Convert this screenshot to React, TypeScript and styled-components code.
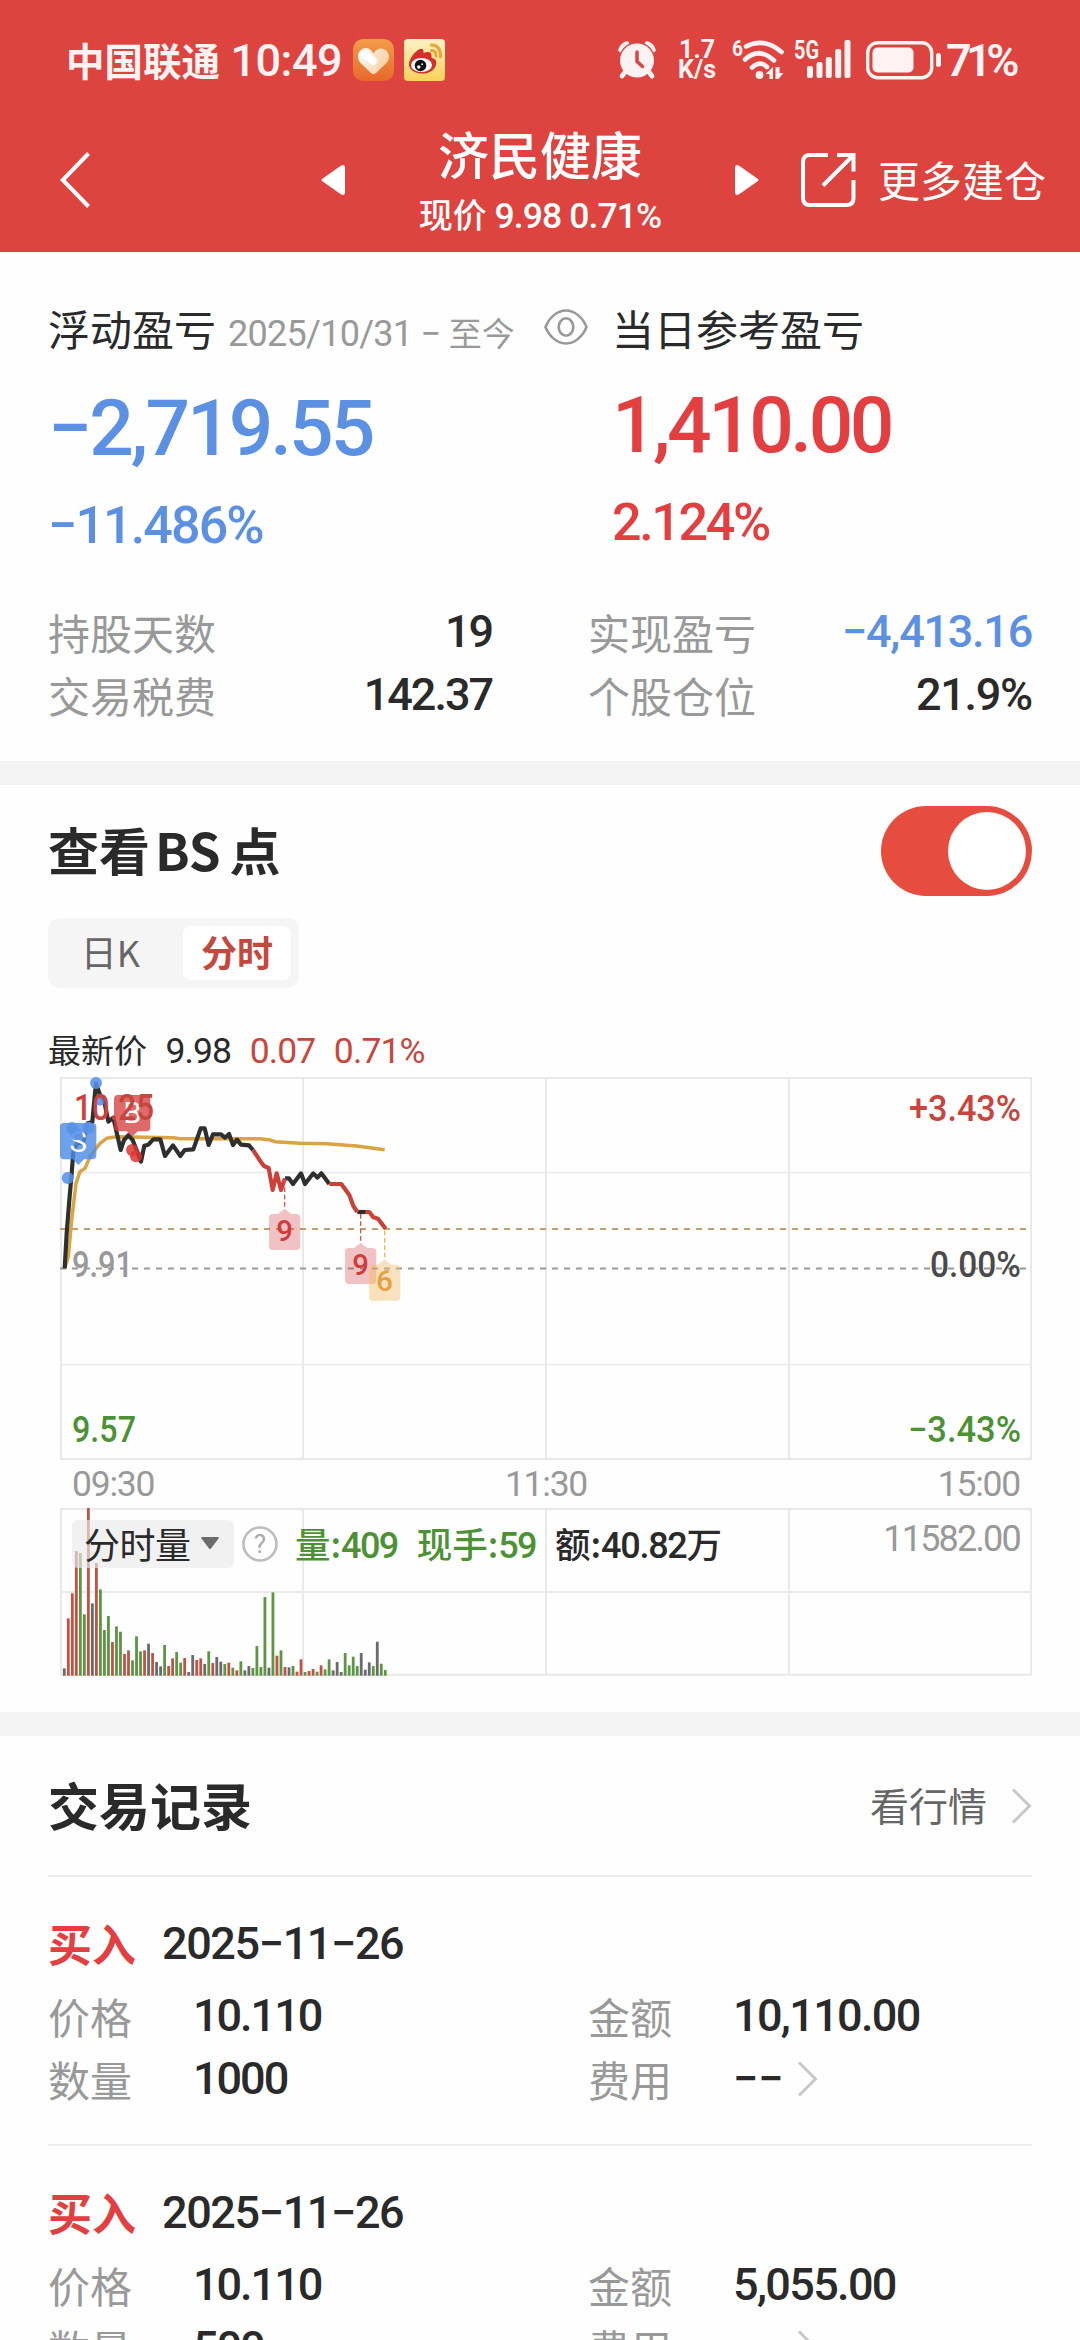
import React from "react";
import styled, { createGlobalStyle } from "styled-components";

const CJK = '"Noto Sans CJK SC", sans-serif';
const NUM = 'Roboto, "Noto Sans CJK SC", sans-serif';

const c = {
  header: "#dd4440",
  ink: "#2a2a2a",
  gray: "#999999",
  mid: "#666666",
  red: "#e33f41",
  deepRed: "#c5483e",
  blue: "#5b90e2",
  green: "#4c9235",
  band: "#f4f4f4",
  line: "#ebebeb",
};

const Global = createGlobalStyle`
  * { box-sizing: border-box; }
  body { margin: 0; background: #fff; }
`;

const Screen = styled.div`
  width: 1080px;
  height: 2340px;
  overflow: hidden;
  background: #fefefe;
  color: ${c.ink};
  font-family: ${CJK};
  white-space: nowrap;
`;

const Num = styled.span<{ $size: number; $color?: string; $weight?: number; $ls?: number }>`
  font-family: ${NUM};
  font-size: ${(p) => p.$size}px;
  font-weight: ${(p) => p.$weight ?? 500};
  color: ${(p) => p.$color ?? "inherit"};
  letter-spacing: ${(p) => p.$ls ?? -0.045}em;
`;

/* header */
const Header = styled.header`
  height: 252px;
  background: ${c.header};
  color: #fff;
`;

const StatusBar = styled.div`
  height: 120px;
  display: flex;
  align-items: center;
  padding: 0 66px;
  color: #fff2f2;
`;

const Carrier = styled.span`
  width: 166px;
  padding-bottom: 2px;
  font-size: 38.5px;
  font-weight: 600;
`;

const Clock = styled.span`
  width: 124px;
  font-family: ${NUM};
  font-size: 45px;
  font-weight: 500;
  letter-spacing: -0.5px;
`;

const AppIcons = styled.span`
  display: flex;
  gap: 10px;
  margin-right: 173px;
`;

const NetSpeed = styled.span`
  display: flex;
  flex-direction: column;
  align-items: center;
  width: 40px;
  margin: 0 15px 0 21px;
  font-family: ${NUM};
  font-size: 25px;
  font-weight: 700;
  line-height: 20px;
`;

const WifiSlot = styled.span`
  display: flex;
  margin-right: 6px;
`;

const SignalSlot = styled.span`
  display: flex;
  margin-right: 14px;
`;

const Percent = styled.span`
  margin-left: 4px;
  font-family: ${NUM};
  font-size: 45px;
  font-weight: 600;
  letter-spacing: -5.5px;
`;

const Nav = styled.nav`
  height: 120px;
  display: flex;
  align-items: center;
  padding-left: 60px;
`;

const BackSlot = styled.span`
  display: flex;
  width: 261px;
`;

const Title = styled.div`
  width: 390px;
  padding-top: 2px;
  text-align: center;
`;

const StockName = styled.div`
  font-size: 51px;
  line-height: 56px;
  font-weight: 500;
`;

const StockQuote = styled.div`
  margin-top: 11px;
  font-size: 34px;
  line-height: 44px;
  font-weight: 500;
`;

const MoreLink = styled.span`
  display: flex;
  align-items: center;
  gap: 22px;
  margin-left: 42px;
  font-size: 42px;
`;

const MoreText = styled.span`
  padding-bottom: 3px;
`;

/* summary */
const Summary = styled.section`
  height: 509px;
  padding: 45px 48px 0;
`;

const Totals = styled.div`
  display: grid;
  grid-template-columns: 564px 1fr;
`;

const HeadRow = styled.div`
  display: flex;
  align-items: center;
  height: 60px;
  font-size: 42px;
`;

const Since = styled.span`
  padding-top: 9px;
  margin: 0 29px 0 12px;
  font-size: 33px;
  color: ${c.gray};
`;

const Amount = styled.div<{ $color: string; $top: number; $ls: number }>`
  margin-top: ${(p) => p.$top}px;
  height: 80px;
  line-height: 80px;
  font-family: ${NUM};
  font-size: 78.5px;
  font-weight: 500;
  letter-spacing: ${(p) => p.$ls}em;
  color: ${(p) => p.$color};
`;

const Rate = styled.div<{ $color: string; $ls: number }>`
  margin-top: 28px;
  height: 60px;
  line-height: 60px;
  font-family: ${NUM};
  font-size: 52px;
  font-weight: 500;
  letter-spacing: ${(p) => p.$ls}em;
  color: ${(p) => p.$color};
`;

const Details = styled.div`
  display: grid;
  grid-template-columns: 444px 444px;
  column-gap: 96px;
  margin-top: 44px;
`;

const Detail = styled.div`
  display: flex;
  justify-content: space-between;
  align-items: center;
  height: 63px;
`;

const Label = styled.span`
  padding-bottom: 1px;
  font-size: 42px;
  color: ${c.gray};
`;

const Band = styled.div`
  height: 24px;
  background: ${c.band};
`;

/* chart section */
const ChartSection = styled.section`
  height: 927px;
  padding: 21px 48px 0;
`;

const ChartHead = styled.div`
  display: flex;
  justify-content: space-between;
  align-items: center;
  height: 90px;
`;

const H2 = styled.h2`
  margin: 0;
  padding-bottom: 5px;
  font-size: 51px;
  line-height: 60px;
  font-weight: 700;
`;

const Latin = styled.span`
  margin: 0 9px 0 5px;
`;

const Toggle = styled.button`
  display: flex;
  justify-content: flex-end;
  width: 151px;
  height: 90px;
  padding: 6px;
  border: 0;
  border-radius: 45px;
  background: #e64d3f;
`;

const Knob = styled.span`
  width: 78px;
  height: 78px;
  border-radius: 50%;
  background: #fff;
`;

const Tabs = styled.div`
  display: flex;
  width: 251px;
  height: 70px;
  margin-top: 22px;
  padding: 8px;
  border-radius: 12px;
  background: #f5f5f5;
`;

const Tab = styled.span<{ $active?: boolean }>`
  width: ${(p) => (p.$active ? 108 : 127)}px;
  height: 54px;
  padding: 0 ${(p) => (p.$active ? 0 : 18)}px 3px 0;
  line-height: 50px;
  text-align: center;
  border-radius: 8px;
  font-size: 36px;
  font-weight: ${(p) => (p.$active ? 700 : 400)};
  color: ${(p) => (p.$active ? c.deepRed : c.mid)};
  background: ${(p) => (p.$active ? "#fff" : "transparent")};
`;

const Latest = styled.div`
  display: flex;
  align-items: baseline;
  height: 41px;
  margin: 41px 0 4px;
  line-height: 41px;
  font-size: 33px;
`;

const LatestItem = styled.span<{ $color?: string }>`
  margin-left: 18.5px;
  font-family: ${NUM};
  font-size: 35.5px;
  letter-spacing: -0.025em;
  color: ${(p) => p.$color ?? c.ink};
`;

const Axis = styled.div`
  display: flex;
  justify-content: space-between;
  align-items: center;
  height: 48px;
  padding: 0 12px 0 24px;
  font-family: ${NUM};
  font-size: 35.5px;
  letter-spacing: -0.035em;
  color: ${c.gray};
`;

const Volume = styled.div`
  position: relative;
  height: 168px;
`;

const Legend = styled.div`
  position: absolute;
  inset: 12px 12px auto 24px;
  display: flex;
  align-items: center;
  height: 48px;
  font-size: 36px;
`;

const Chip = styled.span`
  display: flex;
  align-items: center;
  gap: 9px;
  width: 162px;
  height: 48px;
  padding: 0 0 2px 12px;
  border-radius: 6px;
  background: rgba(234, 234, 234, 0.65);
  letter-spacing: -0.5px;
`;

const Help = styled.svg`
  margin-left: 8px;
`;

const Stat = styled.span<{ $color?: string; $left?: number }>`
  margin-left: ${(p) => p.$left ?? 19}px;
  padding-bottom: 3px;
  font-size: 35.5px;
  font-weight: 500;
  color: ${(p) => p.$color ?? c.ink};
`;

const MaxVolume = styled.span`
  margin-left: auto;
  padding-bottom: 10px;
  font-family: ${NUM};
  font-size: 36px;
  letter-spacing: -0.05em;
  color: ${c.gray};
`;

/* trade records */
const Records = styled.section`
  padding: 0 48px;
`;

const RecordsHead = styled.div`
  display: flex;
  justify-content: space-between;
  align-items: center;
  height: 141px;
  padding-top: 2px;
  border-bottom: 2px solid ${c.line};
`;

const Quotes = styled.span`
  display: flex;
  align-items: center;
  gap: 24px;
  padding-bottom: 2px;
  font-size: 39px;
  color: ${c.mid};
`;

const QuotesText = styled.span`
  padding-bottom: 4px;
`;

const Record = styled.article`
  height: 269px;
  padding-top: 36px;
  border-bottom: 2px solid ${c.line};
`;

const RecordHead = styled.div`
  display: flex;
  align-items: center;
  gap: 26px;
  height: 60px;
  margin-bottom: 11px;
`;

const Side = styled.span`
  font-size: 44px;
  font-weight: 700;
  color: ${c.red};
`;

const Fields = styled.div`
  display: grid;
  grid-template-columns: 540px 1fr;
`;

const Field = styled.div`
  display: flex;
  align-items: center;
  height: 63px;
`;

const FieldLabel = styled(Label)`
  width: 145px;
`;

const Fee = styled.span`
  display: flex;
  align-items: center;
  gap: 13px;
`;

const Glyph = styled.svg`
  display: block;
  overflow: visible;
`;

const Chevron = ({ color = "#c8c8c8" }: { color?: string }) => (
  <Glyph width="21" height="36" viewBox="0 0 21 36" fill="none" stroke={color} strokeWidth="3">
    <path d="M2 1.500 18.500 18 2 34.500" />
  </Glyph>
);

const HeartApp = () => (
  <svg width="41" height="42" viewBox="0 0 41 42">
    <defs>
      <linearGradient id="ho" x1="0" y1="0" x2="0" y2="1">
        <stop offset="0" stopColor="#f29d49" />
        <stop offset="1" stopColor="#e8682c" />
      </linearGradient>
      <linearGradient id="hw" x1="0" y1="0" x2="1" y2="0.4">
        <stop offset="0" stopColor="#fff" />
        <stop offset="1" stopColor="#fbd0a4" />
      </linearGradient>
    </defs>
    <rect width="41" height="42" rx="10" fill="url(#ho)" />
    <path d="M20.500 14.500C24 8 31 8 34.500 13c3 5 1 9-2 12l-9.500 9q-2.500 2-5 0L8 24.500C4.500 21 4 15 7 12c4-5 10.500-3.500 13.500 2.500z" fill="url(#hw)" />
    <path d="M12 15l8 7" stroke="#fff" strokeWidth="8" strokeLinecap="round" />
  </svg>
);

const WeiboApp = () => (
  <svg width="41" height="42" viewBox="0 0 41 42">
    <defs>
      <linearGradient id="wb" x1="0" y1="0" x2="0" y2="1">
        <stop offset="0" stopColor="#fdf0c4" />
        <stop offset="1" stopColor="#f8d259" />
      </linearGradient>
    </defs>
    <rect width="41" height="42" rx="4" fill="url(#wb)" />
    <path d="M5 24c1-5 5-10 9-13 4-2.500 6-1 5.500 3 4-1.500 8-1.500 8 2.500 0 1.500 0 2 .5 2.500 4 1 5 4 4 7-2 6-8 9-14.500 8.500C9.500 34 4 30 5 24z" fill="#d4302b" />
    <ellipse cx="17.500" cy="26" rx="10.500" ry="7" fill="#fff" />
    <circle cx="16.500" cy="26.500" r="5.800" fill="#111" />
    <circle cx="14.800" cy="28" r="1.700" fill="#fff" />
    <circle cx="18.200" cy="25.200" r="0.900" fill="#fff" />
    <path d="M27.500 6q9.500.5 9 12M27.500 11.500q5 .2 4.500 5.500" stroke="#e5a63a" strokeWidth="3" fill="none" strokeLinecap="round" />
  </svg>
);

const Alarm = () => (
  <Glyph width="38" height="38" viewBox="0 0 38 38">
    <g stroke="#fff2f2" strokeLinecap="round" fill="none">
      <path d="M7 31l-3 4M31 31l3 4" strokeWidth="4.500" />
      <path d="M2.500 9Q4 4 9 2.500M35.500 9Q34 4 29 2.500" strokeWidth="4.500" />
    </g>
    <circle cx="19" cy="19" r="18" fill={c.header} />
    <circle cx="19" cy="19.500" r="17" fill="#fff2f2" />
    <path d="M7.500 30.500l-3.500 4.500M30.500 30.500l3.500 4.500" stroke="#fff2f2" strokeLinecap="round" strokeWidth="4.500" />
    <path d="M19 11v9.500l5.500 5" stroke={c.header} strokeWidth="3.500" fill="none" strokeLinecap="round" />
  </Glyph>
);

const Wifi = () => (
  <Glyph width="56" height="42" viewBox="0 0 56 42">
    <text x="0" y="17" fontFamily="Roboto" fontWeight="700" fontSize="22" textLength="11" lengthAdjust="spacingAndGlyphs" fill="#fff2f2">
      6
    </text>
    <g stroke="#fff2f2" strokeWidth="4.600" strokeLinecap="round" fill="none">
      <path d="M14 7.500Q32-2 49.500 13" />
      <path d="M13 20.500Q27 7.500 42 21.500" />
      <path d="M20 28.500Q28 21 35 28" />
    </g>
    <circle cx="27.500" cy="36" r="3.900" fill="#fff2f2" />
    <path d="M41 28v12h-3.500v-5h-4zM43.500 28v12h3l5-6h-4v-6z" fill="#fff2f2" />
  </Glyph>
);

const Signal = () => (
  <Glyph width="58" height="42" viewBox="0 0 58 42">
    <text x="0" y="20" fontFamily="Roboto" fontWeight="700" fontSize="26" textLength="25" lengthAdjust="spacingAndGlyphs" fill="#fff2f2">
      5G
    </text>
    <g fill="#fff2f2">
      <rect x="13" y="27" width="6" height="12" rx="2" />
      <rect x="22.500" y="23" width="6" height="16" rx="2" />
      <rect x="31.800" y="18" width="6" height="21" rx="2" />
      <rect x="41.200" y="10" width="6" height="29" rx="2" />
      <rect x="50.500" y="1" width="6" height="38" rx="2" />
    </g>
  </Glyph>
);

const Battery = () => (
  <Glyph width="76" height="38" viewBox="0 0 76 38">
    <rect x="1.700" y="1.700" width="64" height="35" rx="10" fill="none" stroke="#fff2f2" strokeWidth="3.400" />
    <rect x="6.500" y="6.500" width="41" height="25" rx="5" fill="#fff2f2" />
    <rect x="70" y="12" width="5" height="14" rx="2.500" fill="#fff2f2" />
  </Glyph>
);

const Triangle = ({ flip }: { flip?: boolean }) => (
  <svg width="24" height="30" viewBox="0 0 24 30">
    <path
      d="M2 13.200 19.500 1Q24-1.500 24 3v24q0 4.500-4.500 2L2 16.800Q-1 15 2 13.200z"
      fill="#fff"
      transform={flip ? "matrix(-1 0 0 1 24 0)" : undefined}
    />
  </svg>
);

const Share = () => (
  <svg width="55" height="54" viewBox="0 0 55 54" fill="none" stroke="#fff" strokeWidth="4">
    <path d="M27 2H9Q2 2 2 9v36q0 7 7 7h36.500q7 0 7-7V27" />
    <path d="M36 2h16.500v16.500M52 2.500 22 32.500" />
  </svg>
);

const Eye = () => (
  <svg width="44" height="36" viewBox="0 0 44 36" fill="none" stroke="#999" strokeWidth="2.600">
    <path d="M1.500 18C5 9 13 1.500 22 1.500S39 9 42.500 18C39 27 31 34.500 22 34.500S5 27 1.500 18z" strokeLinejoin="round" />
    <ellipse cx="22" cy="18" rx="7.300" ry="8.700" />
  </svg>
);

/* Intraday price: points are on a 3x grid with its origin at the chart's top left */
const priceBlack = [
  "74,625 80,520 88,420 95,340 100,275 112,250 130,248 143,190 157,186 164,110 168,70 180,105 192,120 205,185 220,173 242,270 252,240 265,226 278,240 303,305 313,257 325,254 340,238 361,238 375,288 399,256 421,288 434,270 460,268 482,205 494,205 506,255 519,223 543,223 555,233 567,222 579,255 591,239 603,254 627,256 639,270",
  "735,355 747,355 759,372 783,340 795,372 820,340 832,353 844,340 868,372",
  "952,456 980,456",
];
const priceRed = [
  "639,270 660,302 672,318 686,324 698,390 710,340 723,390 735,355",
  "868,372 904,372 928,405 940,438 952,456",
  "976,456 988,456 1000,472 1014,476 1037,506",
];
const average =
  "74,625 85,590 95,480 108,370 120,335 135,325 150,290 165,270 180,250 200,235 230,230 400,233 420,236 660,236 690,240 705,245 780,250 860,251 950,258 1034,269";

const Tag = ({ x, y, label, fill, ink }: { x: number; y: number; label: string; fill: string; ink: string }) => (
  <g>
    <path
      d={`M${x} ${y}l20 16h15q12 0 12 12v84q0 12-12 12h-70q-12 0-12-12v-84q0-12 12-12h15z`}
      fill={fill}
    />
    <text x={x} y={y + 96} textAnchor="middle" fontFamily="Roboto" fontWeight="500" fontSize="88" fill={ink}>
      {label}
    </text>
  </g>
);

const AxisText = ({ x, y, w, end, fill, children }: { x: number; y: number; w: number; end?: boolean; fill: string; children: string }) => (
  <text
    x={x}
    y={y}
    textAnchor={end ? "end" : "start"}
    textLength={w}
    lengthAdjust="spacingAndGlyphs"
    fontFamily="Roboto"
    fontWeight="500"
    fontSize="36"
    fill={fill}
  >
    {children}
  </text>
);

const PriceChart = () => (
  <Glyph width="984" height="386" viewBox="48 1074 984 386">
    <g stroke="#e9e9e9" strokeWidth="2">
      <path d="M60 1078H1032M61 1077V1459M303 1077V1459M546 1077V1459M789 1077V1459M1031 1077V1459M60 1459H1032" />
      <path d="M60 1172.500H1032M60 1364.500H1032" strokeWidth="1.500" />
    </g>
    <path d="M60 1229H1028" stroke="#bfa069" strokeWidth="1.800" strokeDasharray="6 6" />
    <path d="M60 1268.500H1028" stroke="#999" strokeWidth="2" strokeDasharray="6 6" />
    <g transform="translate(40 1060) scale(.33333)" fill="none" strokeLinejoin="round">
      <polyline points={average} stroke="#d9a441" strokeWidth="10.500" />
      {priceBlack.map((p) => (
        <polyline key={p} points={p} stroke="#2f2f2f" strokeWidth="12.500" />
      ))}
      {priceRed.map((p) => (
        <polyline key={p} points={p} stroke="#cb4138" strokeWidth="12.500" />
      ))}
      <path d="M734 360V446M962 462V548" stroke="#cf5a58" strokeWidth="4" strokeDasharray="14 8" />
      <path d="M1034 512V598" stroke="#e9b766" strokeWidth="4" strokeDasharray="14 8" />
      <g stroke="none">
        <Tag x={734} y={446} label="9" fill="rgba(216,72,76,.33)" ink="#cf3d3b" />
        <Tag x={962} y={548} label="9" fill="rgba(216,72,76,.33)" ink="#cf3d3b" />
        <Tag x={1034} y={598} label="6" fill="rgba(243,188,96,.42)" ink="#e5a044" />
        <path d="M72 189h85q12 0 12 12v85q0 12-12 12h-25l-17 17-17-17H72q-12 0-12-12v-85q0-12 12-12z" fill="rgba(79,140,229,.82)" />
        <text x="115" y="276" textAnchor="middle" fontFamily="Roboto" fontSize="88" fill="#fff">
          S
        </text>
        <path d="M234 105h85q12 0 12 12v85q0 12-12 12h-25l-17 15-17-15h-26q-12 0-12-12v-85q0-12 12-12z" fill="rgba(212,60,58,.76)" />
        <text x="277" y="190" textAnchor="middle" fontFamily="Roboto" fontSize="86" fill="#fff">
          B
        </text>
        <g fill="rgba(88,146,232,.88)">
          <circle cx="168" cy="69" r="18" />
          <circle cx="180" cy="122" r="15" />
          <circle cx="83" cy="354" r="18" />
          <circle cx="96" cy="204" r="18" />
          <circle cx="145" cy="203" r="18" />
          <circle cx="109" cy="222" r="19" />
        </g>
        <g fill="rgba(222,54,50,.85)">
          <circle cx="276" cy="270" r="18" />
          <circle cx="288" cy="289" r="18" />
        </g>
      </g>
    </g>
    <AxisText x={74} y={1120} w={80} fill="#c8443c">10.25</AxisText>
    <AxisText x={72} y={1277} w={61} fill={c.gray}>9.91</AxisText>
    <AxisText x={72} y={1442} w={64} fill={c.green}>9.57</AxisText>
    <AxisText x={1021} y={1121} w={112} end fill="#c8443c">+3.43%</AxisText>
    <AxisText x={1021} y={1277} w={91} end fill="#4a4a4a">0.00%</AxisText>
    <AxisText x={1021} y={1442} w={113} end fill={c.green}>−3.43%</AxisText>
  </Glyph>
);

/* One height and tone a minute: r up, g down, k flat */
const bars =
  "22k 172r 247r 374r 368g 184g 503r 217k 338r 259g 137g 179g 101r 148g 132g 65r 76r 46g 118g 73g 76r 96k 68r 41k 28k 92g 29r 52r 71g 39g 53r 11k 62k 47r 52r 35k 73g 38r 56k 42k 35g 39r 24g 16r 43g 16k 29k 23g 89g 26g 236g 24k 250g 60r 76g 26r 25k 29g 12r 49r 11g 14r 20r 12g 31r 19g 49g 16k 41k 11k 68g 31g 57g 29g 68k 18k 40k 29g 102k 36g 17g".split(" ");
const tones: Record<string, string> = { r: "#c05347", g: "#5c9644", k: "#6b6b6b" };

const VolumeChart = () => (
  <Glyph width="984" height="168" viewBox="48 1508 984 168">
    <path
      d="M60 1509H1032M61 1508V1675.500M303 1508V1675.500M546 1508V1675.500M789 1508V1675.500M1031 1508V1675.500M60 1592H1032M60 1674.800H1032"
      stroke="#e9e9e9"
      strokeWidth="2"
    />
    {bars.map((b, i) => {
      const h = parseInt(b, 10) / 3;
      return <rect key={i} x={62.9 + i * 4.0125} y={1675.7 - h} width="2.8" height={h} fill={tones[b.slice(-1)]} />;
    })}
  </Glyph>
);

const trades = [
  { date: "2025−11−26", price: "10.110", amount: "10,110.00", count: "1000" },
  { date: "2025−11−26", price: "10.110", amount: "5,055.00", count: "500" },
];

export default function App() {
  return (
    <Screen>
      <Global />
      <Header>
        <StatusBar>
          <Carrier>中国联通</Carrier>
          <Clock>10:49</Clock>
          <AppIcons>
            <HeartApp />
            <WeiboApp />
          </AppIcons>
          <Alarm />
          <NetSpeed>
            <span>1.7</span>
            <span>K/s</span>
          </NetSpeed>
          <WifiSlot>
            <Wifi />
          </WifiSlot>
          <SignalSlot>
            <Signal />
          </SignalSlot>
          <Battery />
          <Percent>71%</Percent>
        </StatusBar>
        <Nav>
          <BackSlot>
            <svg width="30" height="56" viewBox="0 0 30 56" fill="none" stroke="#fff" strokeWidth="4">
              <path d="M28.500 1.500 2.800 28l25.700 26.500" />
            </svg>
          </BackSlot>
          <Triangle />
          <Title>
            <StockName>济民健康</StockName>
            <StockQuote>
              现价 <Num $size={35.5} $ls={-0.025}>9.98 0.71%</Num>
            </StockQuote>
          </Title>
          <Triangle flip />
          <MoreLink>
            <Share />
            <MoreText>更多建仓</MoreText>
          </MoreLink>
        </Nav>
      </Header>

      <Summary>
        <Totals>
          <div>
            <HeadRow>
              浮动盈亏
              <Since>
                <Num $size={36} $weight={400} $ls={-0.02}>2025/10/31 − </Num>至今
              </Since>
              <Eye />
            </HeadRow>
            <Amount $color={c.blue} $top={31} $ls={-0.038}>−2,719.55</Amount>
            <Rate $color={c.blue} $ls={-0.036}>−11.486%</Rate>
          </div>
          <div>
            <HeadRow>当日参考盈亏</HeadRow>
            <Amount $color={c.red} $top={28} $ls={-0.045}>1,410.00</Amount>
            <Rate $color={c.red} $ls={-0.045}>2.124%</Rate>
          </div>
        </Totals>
        <Details>
          <Detail>
            <Label>持股天数</Label>
            <Num $size={45}>19</Num>
          </Detail>
          <Detail>
            <Label>实现盈亏</Label>
            <Num $size={45} $color={c.blue} $ls={-0.028}>−4,413.16</Num>
          </Detail>
          <Detail>
            <Label>交易税费</Label>
            <Num $size={45}>142.37</Num>
          </Detail>
          <Detail>
            <Label>个股仓位</Label>
            <Num $size={45} $ls={-0.028}>21.9%</Num>
          </Detail>
        </Details>
      </Summary>

      <Band />

      <ChartSection>
        <ChartHead>
          <H2>
            查看<Latin>BS</Latin>点
          </H2>
          <Toggle>
            <Knob />
          </Toggle>
        </ChartHead>
        <Tabs>
          <Tab>日K</Tab>
          <Tab $active>分时</Tab>
        </Tabs>
        <Latest>
          最新价
          <LatestItem>9.98</LatestItem>
          <LatestItem $color={c.deepRed}>0.07</LatestItem>
          <LatestItem $color={c.deepRed}>0.71%</LatestItem>
        </Latest>
        <PriceChart />
        <Axis>
          <span>09:30</span>
          <span>11:30</span>
          <span>15:00</span>
        </Axis>
        <Volume>
          <VolumeChart />
          <Legend>
            <Chip>
              分时量
              <svg width="20" height="14" viewBox="0 0 20 14">
                <path d="M2 1h16q1.500 0 .5 1.500L11 12.500q-1 1-2 0L1.500 2.500Q.5 1 2 1z" fill="#6b6b6b" />
              </svg>
            </Chip>
            <Help width="36" height="36" viewBox="0 0 36 36">
              <circle cx="18" cy="18" r="16.500" fill="none" stroke="#bdbdbd" strokeWidth="2.600" />
              <text x="18" y="27" textAnchor="middle" fontFamily="Roboto" fontSize="26" fill="#aaa">
                ?
              </text>
            </Help>
            <Stat $color={c.green} $left={17}>
              量:<Num $size={36}>409</Num>
            </Stat>
            <Stat $color={c.green}>
              现手:<Num $size={36}>59</Num>
            </Stat>
            <Stat>
              额:<Num $size={36} $ls={-0.035}>40.82</Num>万
            </Stat>
            <MaxVolume>11582.00</MaxVolume>
          </Legend>
        </Volume>
      </ChartSection>

      <Band />

      <Records>
        <RecordsHead>
          <H2>交易记录</H2>
          <Quotes>
            <QuotesText>看行情</QuotesText>
            <Chevron />
          </Quotes>
        </RecordsHead>
        {trades.map((t, i) => (
          <Record key={i}>
            <RecordHead>
              <Side>买入</Side>
              <Num $size={45} $ls={-0.031}>{t.date}</Num>
            </RecordHead>
            <Fields>
              <Field>
                <FieldLabel>价格</FieldLabel>
                <Num $size={45}>{t.price}</Num>
              </Field>
              <Field>
                <FieldLabel>金额</FieldLabel>
                <Num $size={45} $ls={-0.037}>{t.amount}</Num>
              </Field>
              <Field>
                <FieldLabel>数量</FieldLabel>
                <Num $size={45}>{t.count}</Num>
              </Field>
              <Field>
                <FieldLabel>费用</FieldLabel>
                <Fee>
                  <Num $size={45} $ls={0}>−−</Num>
                  <Chevron />
                </Fee>
              </Field>
            </Fields>
          </Record>
        ))}
      </Records>
    </Screen>
  );
}
